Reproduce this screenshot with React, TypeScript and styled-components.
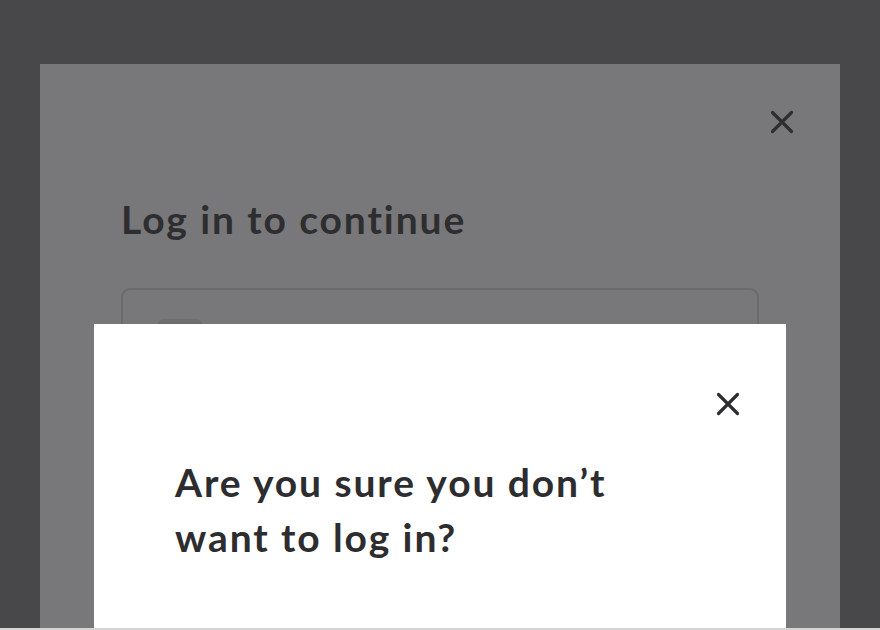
import React from "react";
import styled, { createGlobalStyle } from "styled-components";

const GlobalStyle = createGlobalStyle`
  html, body { margin: 0; padding: 0; background: #48484a; overflow: hidden; }
  * { box-sizing: border-box; }
`;

const Screen = styled.div`
  width: 880px;
  height: 630px;
  display: flex;
  flex-direction: column;
  font-family: Lato, "Noto Sans", sans-serif;
`;

const Backdrop = styled.div`
  position: relative;
  flex: 1;
  background: #48484a;
  padding: 64px 40px 0;
  display: flex;
`;

const Strip = styled.div`
  height: 2px;
  background: #d5d5d5;
`;

const Panel = styled.div`
  flex: 1;
  background: #78787a;
  padding: 42px 81px 0;
  display: flex;
  flex-direction: column;
`;

const CloseRow = styled.div<{ $offset: number }>`
  display: flex;
  justify-content: flex-end;
  margin-right: ${(p) => p.$offset}px;
`;

const CloseButton = styled.button<{ $color: string }>`
  width: 32px;
  height: 32px;
  padding: 0;
  border: 0;
  background: transparent;
  display: flex;
  align-items: center;
  justify-content: center;
  color: ${(p) => p.$color};
`;

const Title = styled.h1<{ $color: string; $gap: number }>`
  margin: ${(p) => p.$gap}px 0 0;
  font-size: 39px;
  line-height: 55px;
  font-weight: 700;
  letter-spacing: 1.9px;
  color: ${(p) => p.$color};
`;

const Field = styled.div`
  margin-top: 41px;
  height: 80px;
  border: 2px solid #6b6b6d;
  border-radius: 9px;
  padding: 29px 0 0 34px;
`;

const Flag = styled.div`
  width: 46px;
  height: 30px;
  border-radius: 7px;
  background: #6e6e70;
`;

const Dialog = styled.div`
  position: absolute;
  left: 94px;
  top: 324px;
  width: 692px;
  height: 304px;
  background: #ffffff;
  padding: 64px 81px 0;
  display: flex;
  flex-direction: column;
`;

const XIcon = ({ size }: { size: number }) => (
  <svg width={size} height={size} viewBox="0 0 24 24" fill="none">
    <path
      d="M2.5 2.5L21.5 21.5M21.5 2.5L2.5 21.5"
      stroke="currentColor"
      strokeWidth="3.2"
      strokeLinecap="round"
    />
  </svg>
);

export default function App() {
  return (
    <>
      <GlobalStyle />
      <Screen>
        <Backdrop>
          <Panel>
            <CloseRow $offset={-39}>
              <CloseButton $color="#2e2e30" aria-label="Close">
                <XIcon size={24} />
              </CloseButton>
            </CloseRow>
            <Title $color="#2e2e30" $gap={54}>
              Log in to continue
            </Title>
            <Field>
              <Flag />
            </Field>
          </Panel>
          <Dialog>
            <CloseRow $offset={-39}>
              <CloseButton $color="#2d2d30" aria-label="Close">
                <XIcon size={24} />
              </CloseButton>
            </CloseRow>
            <Title $color="#2d2d30" $gap={35}>
              Are you sure you don’t
              <br />
              want to log in?
            </Title>
          </Dialog>
        </Backdrop>
        <Strip />
      </Screen>
    </>
  );
}
